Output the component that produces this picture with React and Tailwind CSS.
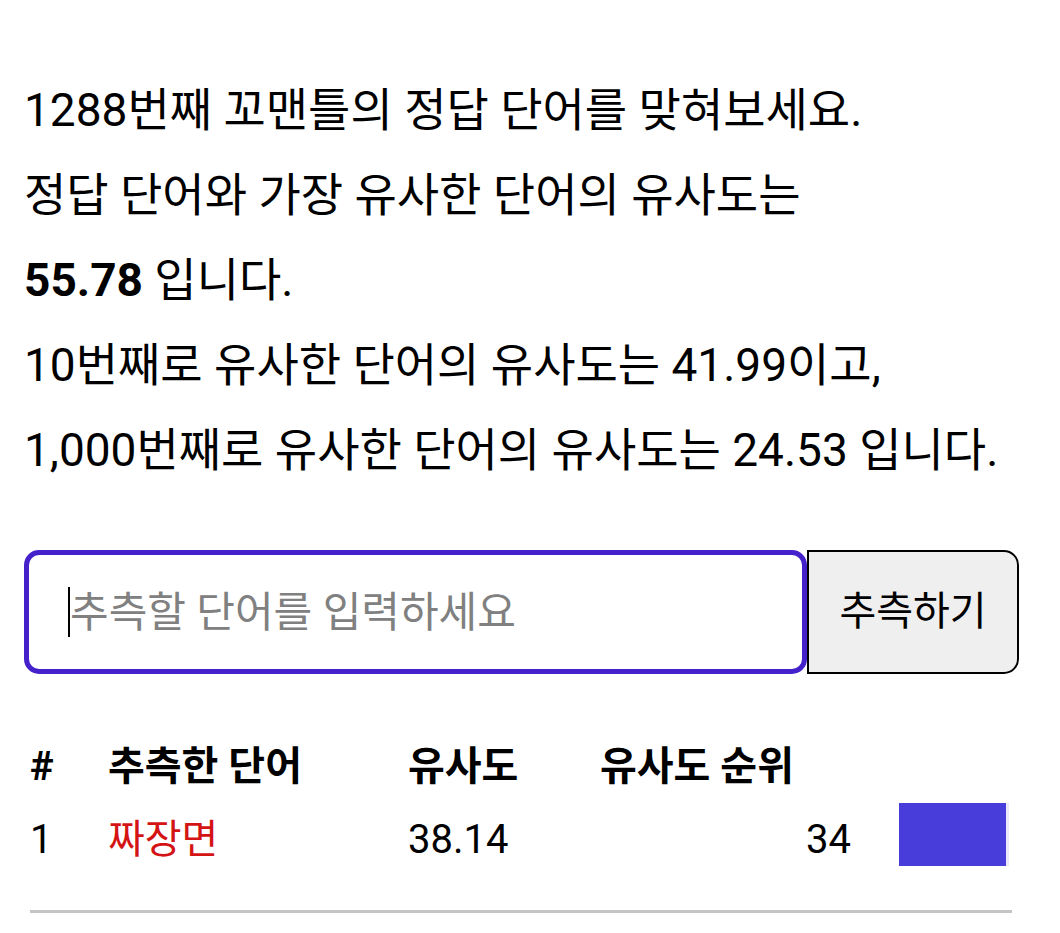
export default function App() {
  const font = { fontFamily: 'Roboto, "Noto Sans CJK KR", sans-serif' };
  return (
    <div className="bg-white w-[1060px] h-[933px] overflow-hidden text-black" style={font}>
      <div className="pt-[68px] px-[24px]">
        <div className="text-[46px] leading-[85px] whitespace-nowrap">
          <div>1288번째 꼬맨틀의 정답 단어를 맞혀보세요.</div>
          <div>정답 단어와 가장 유사한 단어의 유사도는</div>
          <div><b className="font-bold">55.78</b> 입니다.</div>
          <div>10번째로 유사한 단어의 유사도는 41.99이고,</div>
          <div>1,000번째로 유사한 단어의 유사도는 24.53 입니다.</div>
        </div>
        <div className="mt-[57px] flex h-[124px] w-[995px]">
          <div className="flex-1 rounded-[15px] border-[5px] border-[#4521cc] flex items-center pl-[39px]">
            <div className="w-[2px] h-[50px] bg-black"></div>
            <span className="text-[42px] text-[#808080]">추측할 단어를 입력하세요</span>
          </div>
          <div className="w-[212px] rounded-r-[15px] border-2 border-black bg-[#efefef] flex items-center justify-center text-[40px]">
            추측하기
          </div>
        </div>
        <div className="mt-[62px] px-[6px]">
          <div className="flex items-center h-[62px] text-[40px] font-bold">
            <div className="w-[78px]">#</div>
            <div className="w-[300px]">추측한 단어</div>
            <div className="w-[192px]">유사도</div>
            <div className="w-[260px] whitespace-nowrap">유사도 순위</div>
          </div>
          <div className="flex items-center h-[84px] text-[40px]">
            <div className="w-[78px]">1</div>
            <div className="w-[300px] text-[#d41414]">짜장면</div>
            <div className="w-[192px]">38.14</div>
            <div className="w-[251px] text-right">34</div>
            <div className="ml-[48px] mb-[12px] w-[110px] h-[63px] bg-[#ebe9fa]">
              <div className="h-full w-[107px] bg-[#483ddb]"></div>
            </div>
          </div>
          <div className="mt-[28px] h-[3px] w-[982px] bg-[#c4c4c4]"></div>
        </div>
      </div>
    </div>
  );
}
